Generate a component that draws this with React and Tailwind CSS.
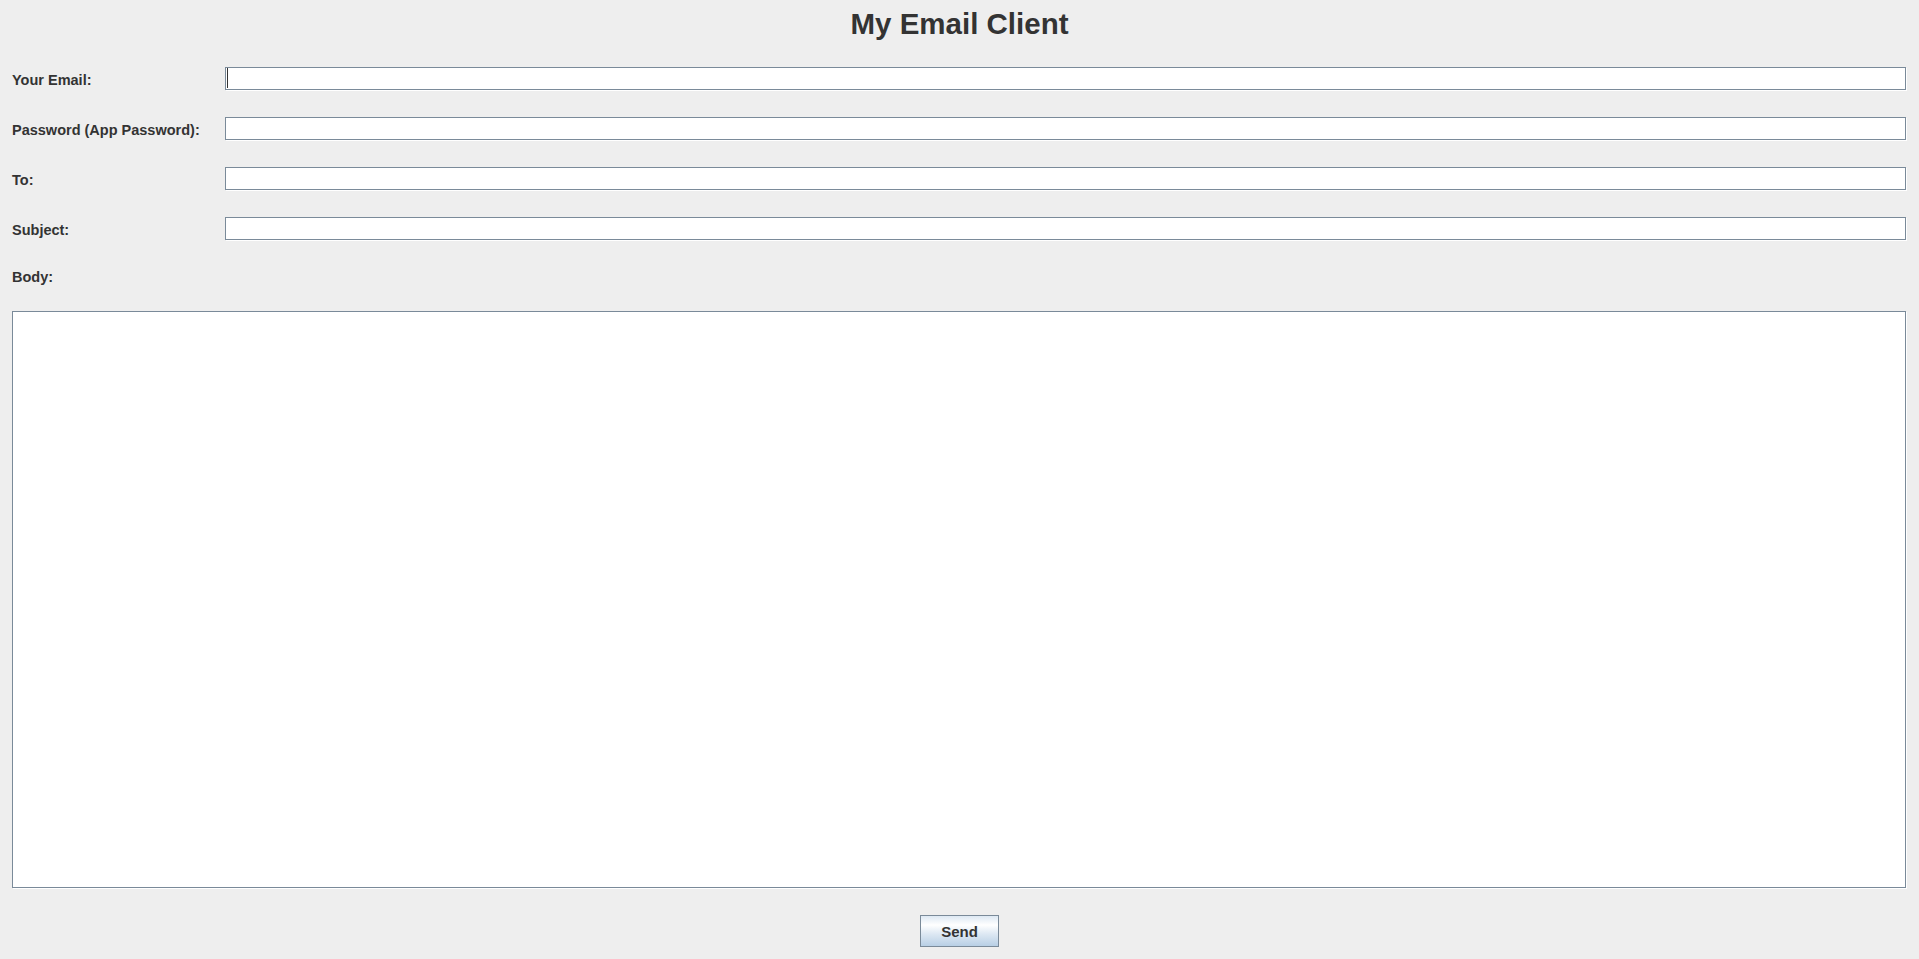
import React from 'react';

const FIELDS = [
  { id: 'email', label: 'Your Email:', type: 'text', caret: true },
  { id: 'password', label: 'Password (App Password):', type: 'password' },
  { id: 'to', label: 'To:', type: 'text' },
  { id: 'subject', label: 'Subject:', type: 'text' },
];

function Field({ field }) {
  return (
    <div className="flex items-start h-[23px]">
      <label htmlFor={field.id} className="w-[213px] shrink-0 mt-[6px] text-[14.5px] leading-[16px] font-bold">
        {field.label}
      </label>
      <div className="relative flex-1 mr-[1px] h-[23px]">
        <input
          id={field.id}
          type={field.type}
          className="w-full h-full bg-white border border-[#7a8a99] shadow-[1px_1px_0_#ffffff] outline-none px-1 text-[14px]"
        />
        {field.caret && <div className="absolute left-[2px] top-[2px] w-[1px] h-[20px] bg-[#333333]" />}
      </div>
    </div>
  );
}

export default function App() {
  return (
    <div className="w-full h-[959px] bg-[#eeeeee] text-[#333333] font-['Liberation_Sans',Arial,sans-serif] px-[12px] flex flex-col">
      {/* Title */}
      <h1 className="pt-[6px] text-center text-[29.5px] font-bold leading-[35px]">My Email Client</h1>

      {/* Header fields */}
      <div className="mt-[25px] flex flex-col gap-[27px]">
        {FIELDS.map((f) => (
          <Field key={f.id} field={f} />
        ))}
      </div>

      {/* Body */}
      <div className="mt-[30px] text-[14.5px] leading-[16px] font-bold">Body:</div>
      <textarea
        className="mt-[26px] mr-[1px] h-[577px] resize-none bg-white border border-[#7a8a99] shadow-[1px_1px_0_#ffffff] outline-none p-1 text-[14px]"
      />

      {/* Send */}
      <div className="mt-[27px] flex justify-center">
        <button className="w-[79px] h-[32px] pt-[1px] border border-[#7a8a99] bg-[linear-gradient(to_bottom,#dde8f3_0%,#ffffff_30%,#dde8f3_60%,#b8cfe5_100%)] text-[15px] font-bold leading-[16px]">
          Send
        </button>
      </div>
    </div>
  );
}
